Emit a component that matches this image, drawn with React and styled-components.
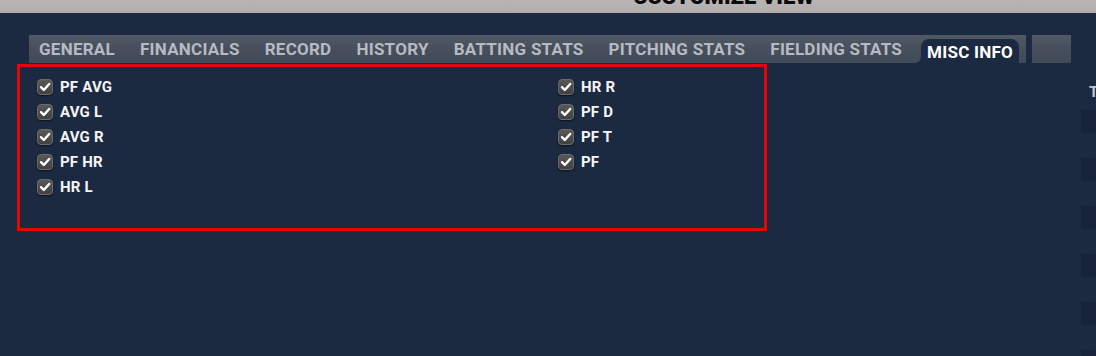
import React from "react";
import styled, { createGlobalStyle } from "styled-components";

const Global = createGlobalStyle`
  html, body { margin: 0; padding: 0; background: #1c2a41; }
  body { font-family: Roboto, "Liberation Sans", Arial, sans-serif; overflow: hidden; }
  * { box-sizing: border-box; }
`;

const Page = styled.div`
  width: 1096px;
  height: 356px;
  background: #1c2a41;
  overflow: hidden;
`;

const Header = styled.div`
  height: 13px;
  background: linear-gradient(180deg, #b9b5b5 0%, #b1adad 100%);
  overflow: hidden;
  padding-left: 633px;
`;

const Title = styled.div`
  margin-top: -14px;
  font-size: 22px;
  line-height: 22px;
  font-weight: 900;
  color: #0b0b0b;
  white-space: nowrap;
`;

const Main = styled.div`
  display: flex;
`;

const LeftCol = styled.div`
  width: 1081px;
  flex: none;
  padding-top: 22px;
`;

const TabRow = styled.div`
  display: flex;
  gap: 6px;
  padding-left: 29px;
`;

const TabBar = styled.div`
  width: 997px;
  height: 28px;
  display: flex;
  align-items: flex-end;
  gap: 13px;
  padding-left: 4px;
  background: linear-gradient(180deg, #515866 0%, #474e5b 55%, #434a57 100%);
`;

const ExtraBox = styled.div`
  width: 39px;
  height: 28px;
  background: linear-gradient(180deg, #515866 0%, #474e5b 55%, #434a57 100%);
`;

const Tab = styled.div`
  position: relative;
  height: ${(p) => (p.$active ? "24px" : "28px")};
  padding: 0 6px;
  display: flex;
  align-items: center;
  font-size: 17px;
  letter-spacing: 0.25px;
  font-weight: 700;
  white-space: nowrap;
  color: ${(p) => (p.$active ? "#ffffff" : "#b6bac2")};
  background: ${(p) => (p.$active ? "#1c2a41" : "transparent")};
  border-radius: ${(p) => (p.$active ? "8px 8px 0 0" : "0")};
  padding-top: ${(p) => (p.$active ? "1px" : "0")};
  &::before {
    content: "";
    display: ${(p) => (p.$active ? "block" : "none")};
    position: absolute;
    left: -6px;
    bottom: 0;
    width: 6px;
    height: 6px;
    background: radial-gradient(circle at 0 0, transparent 5.5px, #1c2a41 6px);
  }
`;

const Highlight = styled.div`
  margin-left: 17px;
  margin-top: 1px;
  width: 750px;
  height: 167px;
  border: 3px solid #e3060b;
  padding: 12px 0 0 17px;
  display: grid;
  grid-template-columns: 521px 1fr;
`;

const Column = styled.div`
  display: flex;
  flex-direction: column;
  gap: 9px;
`;

const Item = styled.label`
  display: flex;
  align-items: center;
  gap: 7px;
  height: 16px;
  font-size: 15px;
  letter-spacing: 0.2px;
  font-weight: 700;
  color: #f4f5f7;
  white-space: nowrap;
`;

const Box = styled.span`
  width: 16px;
  height: 16px;
  flex: none;
  border-radius: 4px;
  background: linear-gradient(180deg, #585858 0%, #404040 100%);
  border: 1px solid #6c6c6c;
  box-shadow: 0 1px 2px rgba(0, 0, 0, 0.6);
  display: flex;
  align-items: center;
  justify-content: center;
`;

const RightCol = styled.div`
  flex: 1;
  padding-top: 70px;
  overflow: hidden;
`;

const RightLabel = styled.div`
  padding-left: 8px;
  font-size: 15px;
  line-height: 18px;
  font-weight: 700;
  color: #c3c7ce;
  margin-bottom: 9px;
`;

const RightRows = styled.div`
  display: flex;
  flex-direction: column;
  gap: 25px;
`;

const RightRow = styled.div`
  height: 23px;
  background: #17233a;
  border-radius: 2px 0 0 2px;
`;

const Check = () => (
  <svg width="12" height="12" viewBox="0 0 12 12">
    <path d="M2 6.2 L4.8 9 L10.2 3" fill="none" stroke="#ffffff" strokeWidth="2.4" strokeLinecap="round" strokeLinejoin="round" />
  </svg>
);

const tabs = ["GENERAL", "FINANCIALS", "RECORD", "HISTORY", "BATTING STATS", "PITCHING STATS", "FIELDING STATS", "MISC INFO"];
const col1 = ["PF AVG", "AVG L", "AVG R", "PF HR", "HR L"];
const col2 = ["HR R", "PF D", "PF T", "PF"];

const CheckItem = ({ label }) => (
  <Item>
    <Box><Check /></Box>
    {label}
  </Item>
);

export default function App() {
  return (
    <Page>
      <Global />
      <Header>
        <Title>CUSTOMIZE VIEW</Title>
      </Header>
      <Main>
        <LeftCol>
          <TabRow>
            <TabBar>
              {tabs.map((t) => (
                <Tab key={t} $active={t === "MISC INFO"}>{t}</Tab>
              ))}
            </TabBar>
            <ExtraBox />
          </TabRow>
          <Highlight>
            <Column>
              {col1.map((l) => <CheckItem key={l} label={l} />)}
            </Column>
            <Column>
              {col2.map((l) => <CheckItem key={l} label={l} />)}
            </Column>
          </Highlight>
        </LeftCol>
        <RightCol>
          <RightLabel>T</RightLabel>
          <RightRows>
            {[0, 1, 2, 3, 4, 5].map((i) => <RightRow key={i} />)}
          </RightRows>
        </RightCol>
      </Main>
    </Page>
  );
}
